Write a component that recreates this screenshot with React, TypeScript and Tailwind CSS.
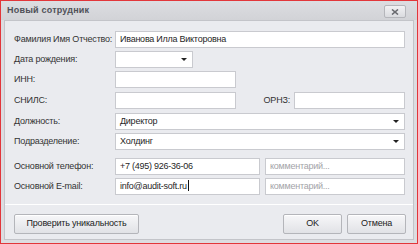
import React from 'react';

const font = { fontFamily: '"Liberation Sans", Arial, sans-serif' };

function Caret() {
  return (
    <svg width="6" height="3" viewBox="0 0 6 3" className="shrink-0">
      <path d="M0 0h6L3 3z" fill="#222" />
    </svg>
  );
}

function Field({ w, value, placeholder, caret, select }: { w: string; value?: string; placeholder?: string; caret?: boolean; select?: boolean }) {
  return (
    <div className={`${w} h-[17px] flex items-center justify-between pl-[4px] pr-[5px] bg-white border border-[#c9cacf] text-[9px] tracking-[-0.25px] leading-none whitespace-nowrap`}>
      <span className={placeholder ? 'text-[#a3a3a8]' : 'text-[#1f1f1f]'}>
        {value || placeholder}
        {caret && <span className="inline-block w-px h-[11px] bg-[#111] align-middle ml-px -mt-[2px]" />}
      </span>
      {select && <Caret />}
    </div>
  );
}

function Row({ label, children, className = '' }: { label: string; children: React.ReactNode; className?: string }) {
  return (
    <div className={`flex items-center ${className}`}>
      <div className="w-[101px] shrink-0 text-[9px] tracking-[-0.2px] text-[#333] leading-none whitespace-nowrap">{label}</div>
      {children}
    </div>
  );
}

function Button({ children, w }: { children: React.ReactNode; w: string }) {
  return (
    <div className={`${w} h-[20px] flex items-center justify-center rounded-[2px] border border-[#b4b5ba] bg-gradient-to-b from-[#f7f7f9] to-[#e1e2e6] text-[9px] tracking-[-0.2px] text-[#222] whitespace-nowrap shadow-[inset_0_1px_0_#fff]`}>
      {children}
    </div>
  );
}

export default function App() {
  return (
    <div style={font} className="w-[418px] h-[244px] border border-[#e2363a] bg-[#dcdde1] flex flex-col">
      {/* Title bar */}
      <div className="h-[19px] shrink-0 flex items-center justify-between pl-[6px] pr-[11px] bg-gradient-to-b from-[#dcdde1] to-[#d2d3d7]">
        <span className="text-[9px] font-bold text-[#505158] tracking-[0.2px]">Новый сотрудник</span>
        <div className="w-[22px] h-[13px] mt-[2px] flex items-center justify-center rounded-[2px] border border-[#b5b6bb] bg-gradient-to-b from-[#f2f2f4] to-[#dadbdf]">
          <svg width="8" height="6" viewBox="0 0 8 6">
            <path d="M1 0.5l6 5M7 0.5l-6 5" stroke="#6a6b70" strokeWidth="1.6" />
          </svg>
        </div>
      </div>

      {/* Body */}
      <div className="flex-1 mx-[3px] mb-[3px] border border-[#c3c4c9] bg-[#eaebef] pl-[9px] pr-[7px] pt-[10px] flex flex-col">
        <div className="flex flex-col gap-[3px]">
          <Row label="Фамилия Имя Отчество:">
            <Field w="w-[290px]" value="Иванова Илла Викторовна" />
          </Row>
          <Row label="Дата рождения:">
            <Field w="w-[78px]" select />
          </Row>
          <Row label="ИНН:">
            <Field w="w-[121px]" />
          </Row>
          <Row label="СНИЛС:" className="mt-px">
            <Field w="w-[121px]" />
            <div className="w-[58px] pr-[4px] text-right text-[9px] tracking-[-0.2px] text-[#333] leading-none">ОРНЗ:</div>
            <Field w="w-[111px]" />
          </Row>
          <Row label="Должность:" className="mt-px">
            <Field w="w-[290px]" value="Директор" select />
          </Row>
          <Row label="Подразделение:">
            <Field w="w-[290px]" value="Холдинг" select />
          </Row>
          <Row label="Основной телефон:" className="mt-[5px]">
            <Field w="w-[145px]" value="+7 (495) 926-36-06" />
            <div className="w-[5px]" />
            <Field w="w-[140px]" placeholder="комментарий..." />
          </Row>
          <Row label="Основной E-mail:">
            <Field w="w-[145px]" value="info@audit-soft.ru" caret />
            <div className="w-[5px]" />
            <Field w="w-[140px]" placeholder="комментарий..." />
          </Row>
        </div>

        <div className="h-px bg-[#cfd0d5] border-b border-white -ml-[9px] -mr-[7px] mt-[9px]" />

        <div className="flex items-center justify-between mt-[9px]">
          <Button w="w-[125px]">Проверить уникальность</Button>
          <div className="flex gap-[5px]">
            <Button w="w-[59px]">OK</Button>
            <Button w="w-[59px]">Отмена</Button>
          </div>
        </div>
      </div>
    </div>
  );
}
